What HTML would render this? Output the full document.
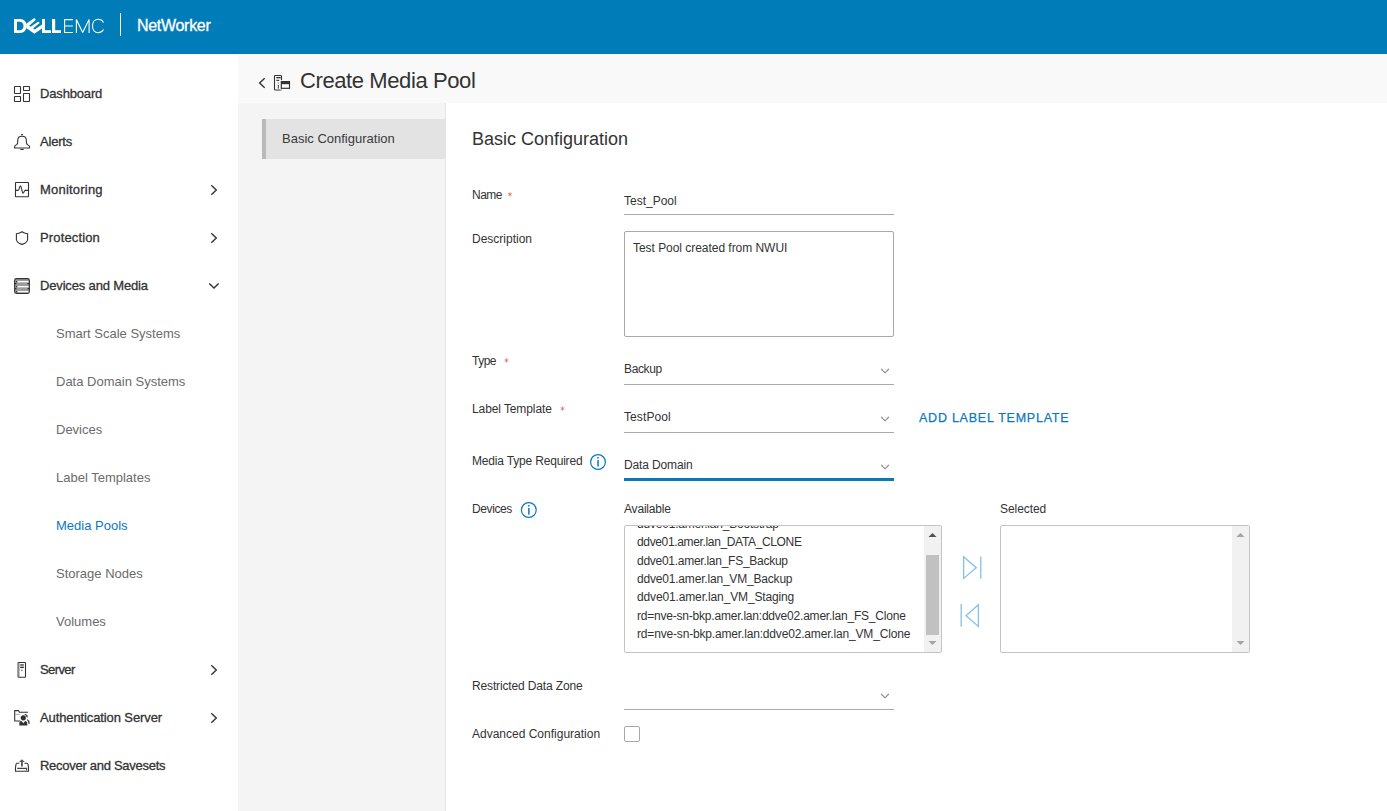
<!DOCTYPE html>
<html><head><meta charset="utf-8">
<style>
*{box-sizing:border-box;margin:0;padding:0}
html,body{width:1387px;height:811px;overflow:hidden;background:#fff;font-family:"Liberation Sans",sans-serif;color:#333}
.a{position:absolute}
.t{position:absolute;white-space:nowrap;line-height:1}
#hdr{left:0;top:0;width:1387px;height:54px;background:#007db8}
#side{left:0;top:54px;width:238px;height:757px;background:#fff}
#titlebar{left:238px;top:54px;width:1149px;height:49px;background:#f9f9f9}
#lpanel{left:238px;top:103px;width:208px;height:708px;background:#f4f4f4;border-right:1px solid #e4e4e4}
#active{left:262px;top:119px;width:183px;height:40px;background:#e3e3e3;border-left:4px solid #bababa}
.nav{font-size:13px;font-weight:400;color:#333;left:40px;letter-spacing:-0.2px;-webkit-text-stroke:0.3px #333}
.sub{font-size:13px;color:#6b6b6b;left:56px}
.lbl{font-size:12px;color:#333;left:472px}
.val{font-size:12px;color:#333;left:624px}
.ul{left:624px;width:270px;height:1px;background:#aaa}
.star{font-size:10px;color:#c0392b}
</style></head><body>

<!-- header -->
<div id="hdr" class="a"></div>
<svg class="a" style="left:0;top:0" width="240" height="54" viewBox="0 0 240 54">
  <g fill="#fff">
    <path fill-rule="evenodd" d="M14,19H20C24.2,19 26.6,22 26.6,26C26.6,30 24.2,33 20,33H14Z M17,21.8H19.8C22.2,21.8 23.5,23.5 23.5,26C23.5,28.5 22.2,30.2 19.8,30.2H17Z"/>
    <path d="M42,19H45V30.2H51V33H42Z"/>
    <path d="M52,19H55.2V30.2H61V33H52Z"/>
  </g>
  <path fill="#fff" d="M26.2,23.7 L34.3,18.1 L35.9,19.8 L29.2,25.7 L30.5,26.7 L38.4,21.4 L39.7,22.9 L33.2,28.3 L34.6,29.6 L42,24.6 V28.4 L34.3,33.8 L26.2,28.1 Z"/>
  <g stroke="#fff" stroke-width="1.1" fill="none">
    <path d="M73,19.6H64.6V32.5H73 M64.6,26H72.8"/>
    <path d="M76.4,33V19.6L82.7,32.4L89.1,19.6V33" stroke-linejoin="bevel"/>
    <path d="M103.5,22.5C102.3,20.3 100.4,19.3 98.3,19.3C94.8,19.3 92.5,22.2 92.5,26C92.5,29.8 94.8,32.7 98.3,32.7C100.4,32.7 102.3,31.7 103.5,29.5"/>
  </g>
  <rect x="120" y="13" width="1" height="23" fill="#fff"/>
</svg>
<div class="t" style="left:137px;top:18px;font-size:16px;color:#fff;letter-spacing:-0.3px;-webkit-text-stroke:0.3px #fff">NetWorker</div>

<!-- sidebar -->
<div id="side" class="a"></div>
<div class="t nav" style="top:87px;letter-spacing:-0.16px">Dashboard</div>
<div class="t nav" style="top:135px;letter-spacing:-0.21px">Alerts</div>
<div class="t nav" style="top:183px;letter-spacing:0.21px">Monitoring</div>
<div class="t nav" style="top:231px;letter-spacing:0.14px">Protection</div>
<div class="t nav" style="top:279px;letter-spacing:-0.16px">Devices and Media</div>
<div class="t sub" style="top:327px">Smart Scale Systems</div>
<div class="t sub" style="top:375px">Data Domain Systems</div>
<div class="t sub" style="top:423px">Devices</div>
<div class="t sub" style="top:471px">Label Templates</div>
<div class="t sub" style="top:519px;color:#0a78c0">Media Pools</div>
<div class="t sub" style="top:567px">Storage Nodes</div>
<div class="t sub" style="top:615px">Volumes</div>
<div class="t nav" style="top:663px;letter-spacing:-0.6px">Server</div>
<div class="t nav" style="top:711px;letter-spacing:-0.11px">Authentication Server</div>
<div class="t nav" style="top:759px;letter-spacing:-0.28px">Recover and Savesets</div>


<!-- sidebar icons -->
<svg class="a" style="left:0;top:0" width="238" height="811" viewBox="0 0 238 811">
 <g fill="none" stroke="#333" stroke-width="1.1">
  <rect x="14.5" y="86.5" width="6" height="7" rx="0.4"/>
  <rect x="23.5" y="86.5" width="6" height="4" rx="0.4"/>
  <rect x="14.5" y="96.5" width="6" height="5" rx="0.4"/>
  <rect x="23.5" y="93.5" width="6" height="8" rx="0.4"/>
  <path d="M14.6,148 V146.6 C14.6,145.6 15.9,145.1 16.7,144.6 C17.5,144.1 17.8,142 17.8,140.2 C17.8,137.6 19.6,136.3 22,136.3 C24.4,136.3 26.3,137.6 26.3,140.2 C26.3,142 26.6,144.1 27.4,144.6 C28.2,145.1 29.5,145.6 29.5,146.6 V148 Z"/>
  <rect x="15.5" y="182.5" width="13" height="14.2" rx="0.5"/>
  <path d="M15.7,190.4 H18.2 C19.2,190.4 19.6,185.8 20.4,185.8 C21.4,185.8 22.2,193.3 23,193.3 C23.8,193.3 24.3,190.4 25.1,190.4 H28.3"/>
  <path d="M22,231.7 C20.5,232.9 18.5,233.4 16.4,233.7 V239.5 C16.4,241.6 19.5,243.7 22,244.4 C24.5,243.7 27.6,241.6 27.6,239.5 V233.7 C25.5,233.4 23.5,232.9 22,231.7 Z"/>
  <rect x="18.1" y="662.5" width="7.4" height="14.8" rx="0.6"/>
 </g>
 <g fill="none" stroke="#333" stroke-width="1.4">
  <path d="M211.3,185.2 L216.3,190 L211.3,194.8"/>
  <path d="M211.3,233.2 L216.3,238 L211.3,242.8"/>
  <path d="M211.3,665.2 L216.3,670 L211.3,674.8"/>
  <path d="M211.3,713.2 L216.3,718 L211.3,722.8"/>
  <path d="M209.3,283.4 L214,288.1 L218.6,283.4"/>
 </g>
 <g fill="#333">
  <rect x="21.1" y="134" width="1.8" height="1.3"/>
  <rect x="20.3" y="148.9" width="3.4" height="1.1"/>
 </g>
 <!-- devices stack -->
 <g>
  <path d="M16.5,278.6 H27.5 C28.6,278.6 29.4,279.4 29.4,280.5 V291.6 C29.4,292.6 28.6,293.4 27.5,293.4 H16.5 C15.4,293.4 14.6,292.6 14.6,291.6 V280.5 C14.6,279.4 15.4,278.6 16.5,278.6 Z" fill="#9c9c9c" stroke="#333" stroke-width="1.1"/>
  <rect x="17.4" y="281" width="11" height="1.3" fill="#fff"/>
  <rect x="17.4" y="286" width="11" height="1.3" fill="#fff"/>
  <rect x="17.4" y="291" width="11" height="1.3" fill="#fff"/>
  <rect x="16" y="281" width="1.2" height="1.2" fill="#333"/>
  <rect x="16" y="286" width="1.2" height="1.2" fill="#333"/>
  <rect x="16" y="291" width="1.2" height="1.2" fill="#333"/>
  <path d="M14.8,283.6 H16.5 M27.5,283.6 H29.2 M14.8,288.6 H16.5 M27.5,288.6 H29.2" stroke="#333" stroke-width="1.1"/>
 </g>
 <!-- server inner -->
 <g fill="#333">
  <rect x="20.2" y="665.3" width="3.6" height="1.7" fill="#aaa"/>
  <rect x="20.2" y="664.3" width="3.6" height="1.1"/>
  <rect x="20.2" y="667" width="3.6" height="1.1"/>
  <rect x="21.2" y="669.7" width="1.2" height="1.1"/>
  <rect x="18.6" y="663" width="1" height="14" fill="#999"/>
 </g>
 <!-- auth icon -->
 <g fill="none" stroke="#333" stroke-width="1.1">
  <path d="M20.5,721 H14.7 V710.6 H18.6 L19.4,712.2 H28"/>
 </g>
 <g fill="#333">
  <circle cx="23.3" cy="717.8" r="2.6"/>
  <path d="M19.3,725.6 V723.2 C19.3,722 20.3,721.3 21.5,721.1 L23.3,723.2 L25.1,721.1 C26.3,721.3 27.3,722 27.3,723.2 V725.6 Z"/>
  <path d="M24.8,714 C26.6,714.2 28.3,715.3 27.6,717.6 L26.3,717 C26.5,715.9 26,715.2 24.6,715.1 Z"/>
  <path d="M27.2,719.2 C29,720 30.3,721.8 29.4,724 L28.1,723.3 C28.5,722 28,720.9 26.9,720.3 Z"/>
  <rect x="15.2" y="713.8" width="5" height="1" fill="#aaa"/>
 </g>
 <!-- recover icon -->
 <g fill="none" stroke="#333" stroke-width="1.1">
  <path d="M19.4,763.3 H17.4 C16.6,763.3 16.1,763.9 15.9,764.7 L15.5,767.5 V771.2 H28.5 V767.5 L28.1,764.7 C27.9,763.9 27.4,763.3 26.6,763.3 H24.4"/>
  <path d="M17.2,768.4 H26.6 V770.6" stroke="#444"/>
 </g>
 <path d="M21.9,759.2 L24.8,762.1 H22.8 V766.4 H21 V762.1 H19 Z" fill="#555"/>
</svg>

<!-- title bar -->
<div id="titlebar" class="a"></div>
<div class="t" style="left:300px;top:70px;font-size:22px;color:#333;letter-spacing:-0.4px">Create Media Pool</div>

<!-- left panel -->
<div id="lpanel" class="a"></div>
<div id="active" class="a"></div>
<div class="t" style="left:282px;top:132px;font-size:13px;color:#3a3a3a">Basic Configuration</div>

<!-- content -->
<div class="t" style="left:472px;top:130px;font-size:18px;color:#333">Basic Configuration</div>

<div class="t lbl" style="top:189px;letter-spacing:-0.5px">Name</div>
<div class="t lbl" style="top:233px">Description</div>
<div class="t lbl" style="top:355px;letter-spacing:-0.5px">Type</div>
<div class="t lbl" style="top:403px;letter-spacing:-0.1px">Label Template</div>
<div class="t lbl" style="top:455px;letter-spacing:-0.18px">Media Type Required</div>
<div class="t lbl" style="top:503px;letter-spacing:-0.4px">Devices</div>
<div class="t lbl" style="top:680px;letter-spacing:-0.14px">Restricted Data Zone</div>
<div class="t lbl" style="top:728px">Advanced Configuration</div>

<div class="t val" style="top:195px">Test_Pool</div>
<div class="a ul" style="top:214px"></div>
<div class="a" style="left:624px;top:231px;width:270px;height:106px;border:1px solid #a8a8a8;border-radius:2px"></div>
<div class="t val" style="left:633px;top:242px;letter-spacing:-0.04px">Test Pool created from NWUI</div>
<div class="t val" style="top:363px;letter-spacing:-0.37px">Backup</div>
<div class="a ul" style="top:384px"></div>
<div class="t val" style="top:411px;letter-spacing:0.1px">TestPool</div>
<div class="a ul" style="top:432px"></div>
<div class="t" style="left:919px;top:412px;font-size:12.5px;color:#0a78c0;letter-spacing:0.76px;-webkit-text-stroke:0.25px #0a78c0">ADD LABEL TEMPLATE</div>
<div class="t val" style="top:459px;letter-spacing:-0.14px">Data Domain</div>
<div class="a" style="left:624px;top:478px;width:270px;height:3px;background:#0b79b8"></div>
<div class="t val" style="top:503px;letter-spacing:-0.19px">Available</div>
<div class="t" style="left:1000px;top:503px;font-size:12px;color:#333;letter-spacing:-0.06px">Selected</div>
<div class="a ul" style="top:709px"></div>
<div class="a" style="left:624px;top:726px;width:16px;height:16px;border:1px solid #a8a8a8;border-radius:2px"></div>


<!-- title icons -->
<svg class="a" style="left:238px;top:54px" width="80" height="49" viewBox="238 54 80 49">
 <path d="M264.7,78.2 L259.6,82.9 L264.7,87.7" fill="none" stroke="#333" stroke-width="1.4"/>
 <rect x="274.5" y="75.5" width="7" height="14.5" rx="0.8" fill="none" stroke="#333" stroke-width="1.1"/>
 <rect x="276.3" y="77" width="4.4" height="1.3" fill="#333"/>
 <rect x="276.3" y="79.8" width="3" height="1.1" fill="#333"/>
 <rect x="277.8" y="82.6" width="1" height="1" fill="#555"/>
 <rect x="277.8" y="85" width="1" height="3.6" fill="#333"/>
 <rect x="279.8" y="80.2" width="11" height="9.4" fill="#fff"/>
 <rect x="281.3" y="81.6" width="8.2" height="6.7" fill="#fff" stroke="#333" stroke-width="1.2"/>
 <rect x="281.3" y="81.6" width="8.2" height="2.6" fill="#333"/>
</svg>

<!-- form decorations -->
<svg class="a" style="left:446px;top:103px" width="941" height="708" viewBox="446 103 941 708">
 <g stroke="#e06a6a" stroke-width="0.8" fill="none">
  <path d="M509.9,192.3 V196.3 M508.1,193.3 L511.7,195.3 M508.1,195.3 L511.7,193.3"/>
  <path d="M506.5,358.4 V362.4 M504.7,359.4 L508.3,361.4 M504.7,361.4 L508.3,359.4"/>
  <path d="M562.5,406.6 V410.6 M560.7,407.6 L564.3,409.6 M560.7,409.6 L564.3,407.6"/>
 </g>
 <g stroke="#8a8a8a" stroke-width="1.15" fill="none">
  <path d="M881.2,369 L885,372.8 L888.8,369"/>
  <path d="M881.2,417 L885,420.8 L888.8,417"/>
  <path d="M881.2,465 L885,468.8 L888.8,465"/>
  <path d="M881.2,694 L885,697.8 L888.8,694"/>
 </g>
 <g stroke="#0a78c0" stroke-width="1.2" fill="none">
  <circle cx="598" cy="462" r="7.4"/>
  <circle cx="528.8" cy="510" r="7.4"/>
 </g>
 <g fill="#0a78c0">
  <rect x="597.3" y="460" width="1.5" height="6.6"/>
  <circle cx="598" cy="457.8" r="0.9"/>
  <rect x="528.1" y="508" width="1.5" height="6.6"/>
  <circle cx="528.8" cy="505.8" r="0.9"/>
 </g>
 <g stroke="#86c0e3" stroke-width="1.3" fill="none">
  <path d="M963.6,556.8 L976.2,567.7 L963.6,578.4 Z"/>
  <path d="M980.8,556.6 V578.8"/>
  <path d="M978.4,604.8 L966,615.7 L978.4,626.4 Z"/>
  <path d="M961.2,604 V626.8"/>
 </g>
</svg>

<!-- available list -->
<div class="a" style="left:624px;top:525px;width:318px;height:128px;border:1px solid #c4c4c4;border-radius:2px;overflow:hidden;background:#fff">
 <div class="a" style="left:12px;top:-11.3px;font-size:12px;line-height:18.4px;color:#333;white-space:nowrap">
  <div style="letter-spacing:-0.2px">ddve01.amer.lan_Bootstrap</div>
  <div style="letter-spacing:-0.35px">ddve01.amer.lan_DATA_CLONE</div>
  <div style="letter-spacing:-0.27px">ddve01.amer.lan_FS_Backup</div>
  <div style="letter-spacing:-0.19px">ddve01.amer.lan_VM_Backup</div>
  <div style="letter-spacing:-0.14px">ddve01.amer.lan_VM_Staging</div>
  <div style="letter-spacing:-0.21px">rd=nve-sn-bkp.amer.lan:ddve02.amer.lan_FS_Clone</div>
  <div style="letter-spacing:-0.17px">rd=nve-sn-bkp.amer.lan:ddve02.amer.lan_VM_Clone</div>
 </div>
 <div class="a" style="right:0;top:0;width:17px;height:126px;background:#f1f1f1"></div>
 <div class="a" style="right:2px;top:29px;width:13px;height:80px;background:#c1c1c1"></div>
 <svg class="a" style="right:0;top:0" width="17" height="126"><path d="M4.5,11 L8.5,7 L12.5,11 Z" fill="#505050"/><path d="M4.5,115 L8.5,119 L12.5,115 Z" fill="#a3a3a3"/></svg>
</div>

<!-- selected list -->
<div class="a" style="left:1000px;top:525px;width:250px;height:128px;border:1px solid #c4c4c4;border-radius:2px;overflow:hidden;background:#fff">
 <div class="a" style="right:0;top:0;width:17px;height:126px;background:#f1f1f1"></div>
 <svg class="a" style="right:0;top:0" width="17" height="126"><path d="M4.5,11 L8.5,7 L12.5,11 Z" fill="#a3a3a3"/><path d="M4.5,115 L8.5,119 L12.5,115 Z" fill="#a3a3a3"/></svg>
</div>

</body></html>
